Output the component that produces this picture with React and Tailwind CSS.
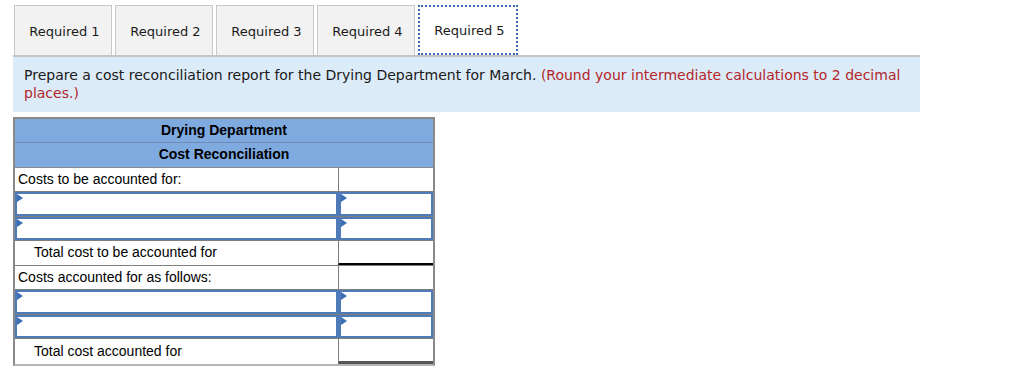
import React from 'react';

const tabs = ['Required 1', 'Required 2', 'Required 3', 'Required 4', 'Required 5'];

function Marker() {
  return (
    <span className="absolute left-0 top-0 h-0 w-0 border-y-[4px] border-l-[6px] border-y-transparent border-l-[#3d6fb6]" />
  );
}

function InputRow() {
  return (
    <div className="flex h-[24.5px] border-b border-[#7f7f7f]">
      <div className="relative flex-1 border-2 border-[#4f7ab8] bg-white">
        <Marker />
      </div>
      <div className="relative w-[95px] border-2 border-l-[3px] border-[#4f7ab8] bg-white">
        <Marker />
      </div>
    </div>
  );
}

function LabelRow({ label, indent, total, last }) {
  return (
    <div className={`flex h-[24.5px] ${last ? '' : 'border-b border-[#7f7f7f]'}`}>
      <div className={`flex flex-1 items-center ${indent ? 'pl-[19px]' : 'pl-[3px]'}`}>{label}</div>
      <div
        className={`w-[95px] border-l border-[#7f7f7f] ${total ? (last ? 'border-b-[3px] border-b-[#555]' : 'border-b-2 border-b-black') : ''}`}
      />
    </div>
  );
}

export default function App() {
  return (
    <div className="h-[372px] w-[1024px] bg-white pl-[13px] pt-[5px] font-['DejaVu_Sans',Verdana,sans-serif] text-[13px] text-[#1a1a1a]">
      {/* tab strip */}
      <div className="flex w-[907px] gap-[3px] border-b-2 border-[#c4c4c4] pl-px">
        {tabs.map((t, i) => (
          <div
            key={t}
            className={
              i === 4
                ? 'flex h-[50px] w-[100px] items-center justify-center border-2 border-dotted border-[#3c6cb4] bg-white pl-[3px] pt-[2px] text-[13px] -mb-[2px]'
                : 'flex h-[50px] w-[98px] items-center justify-center border border-b-0 border-[#c8c8c8] bg-[#f2f2f2] pl-[3px] pt-[2px] text-[13px]'
            }
          >
            {t}
          </div>
        ))}
      </div>

      {/* instructions */}
      <div className="w-[907px] bg-[#dcebf8] px-[11px] pb-[10px] pt-[9px] text-[14px] leading-[18px]">
        Prepare a cost reconciliation report for the Drying Department for March.{' '}
        <span className="text-[#b3262a]">(Round your intermediate calculations to 2 decimal places.)</span>
      </div>

      {/* reconciliation table */}
      <div className="mt-[5px] w-[422px] border-x-2 border-b-2 border-t-2 border-x-[#8a8a8a] border-t-[#8a8a8a] border-b-[#b5b5b5] font-['Liberation_Sans',Arial,sans-serif] text-[14px] text-black">
        <div className="flex h-[24px] items-center justify-center border-b border-[#6e8db5] bg-[#7faae0] font-bold">
          Drying Department
        </div>
        <div className="flex h-[24.5px] items-center justify-center border-b border-[#8a8a8a] bg-[#7faae0] font-bold">
          Cost Reconciliation
        </div>
        <LabelRow label="Costs to be accounted for:" />
        <InputRow />
        <InputRow />
        <LabelRow label="Total cost to be accounted for" indent total />
        <LabelRow label="Costs accounted for as follows:" />
        <InputRow />
        <InputRow />
        <LabelRow label="Total cost accounted for" indent total last />
      </div>
    </div>
  );
}
